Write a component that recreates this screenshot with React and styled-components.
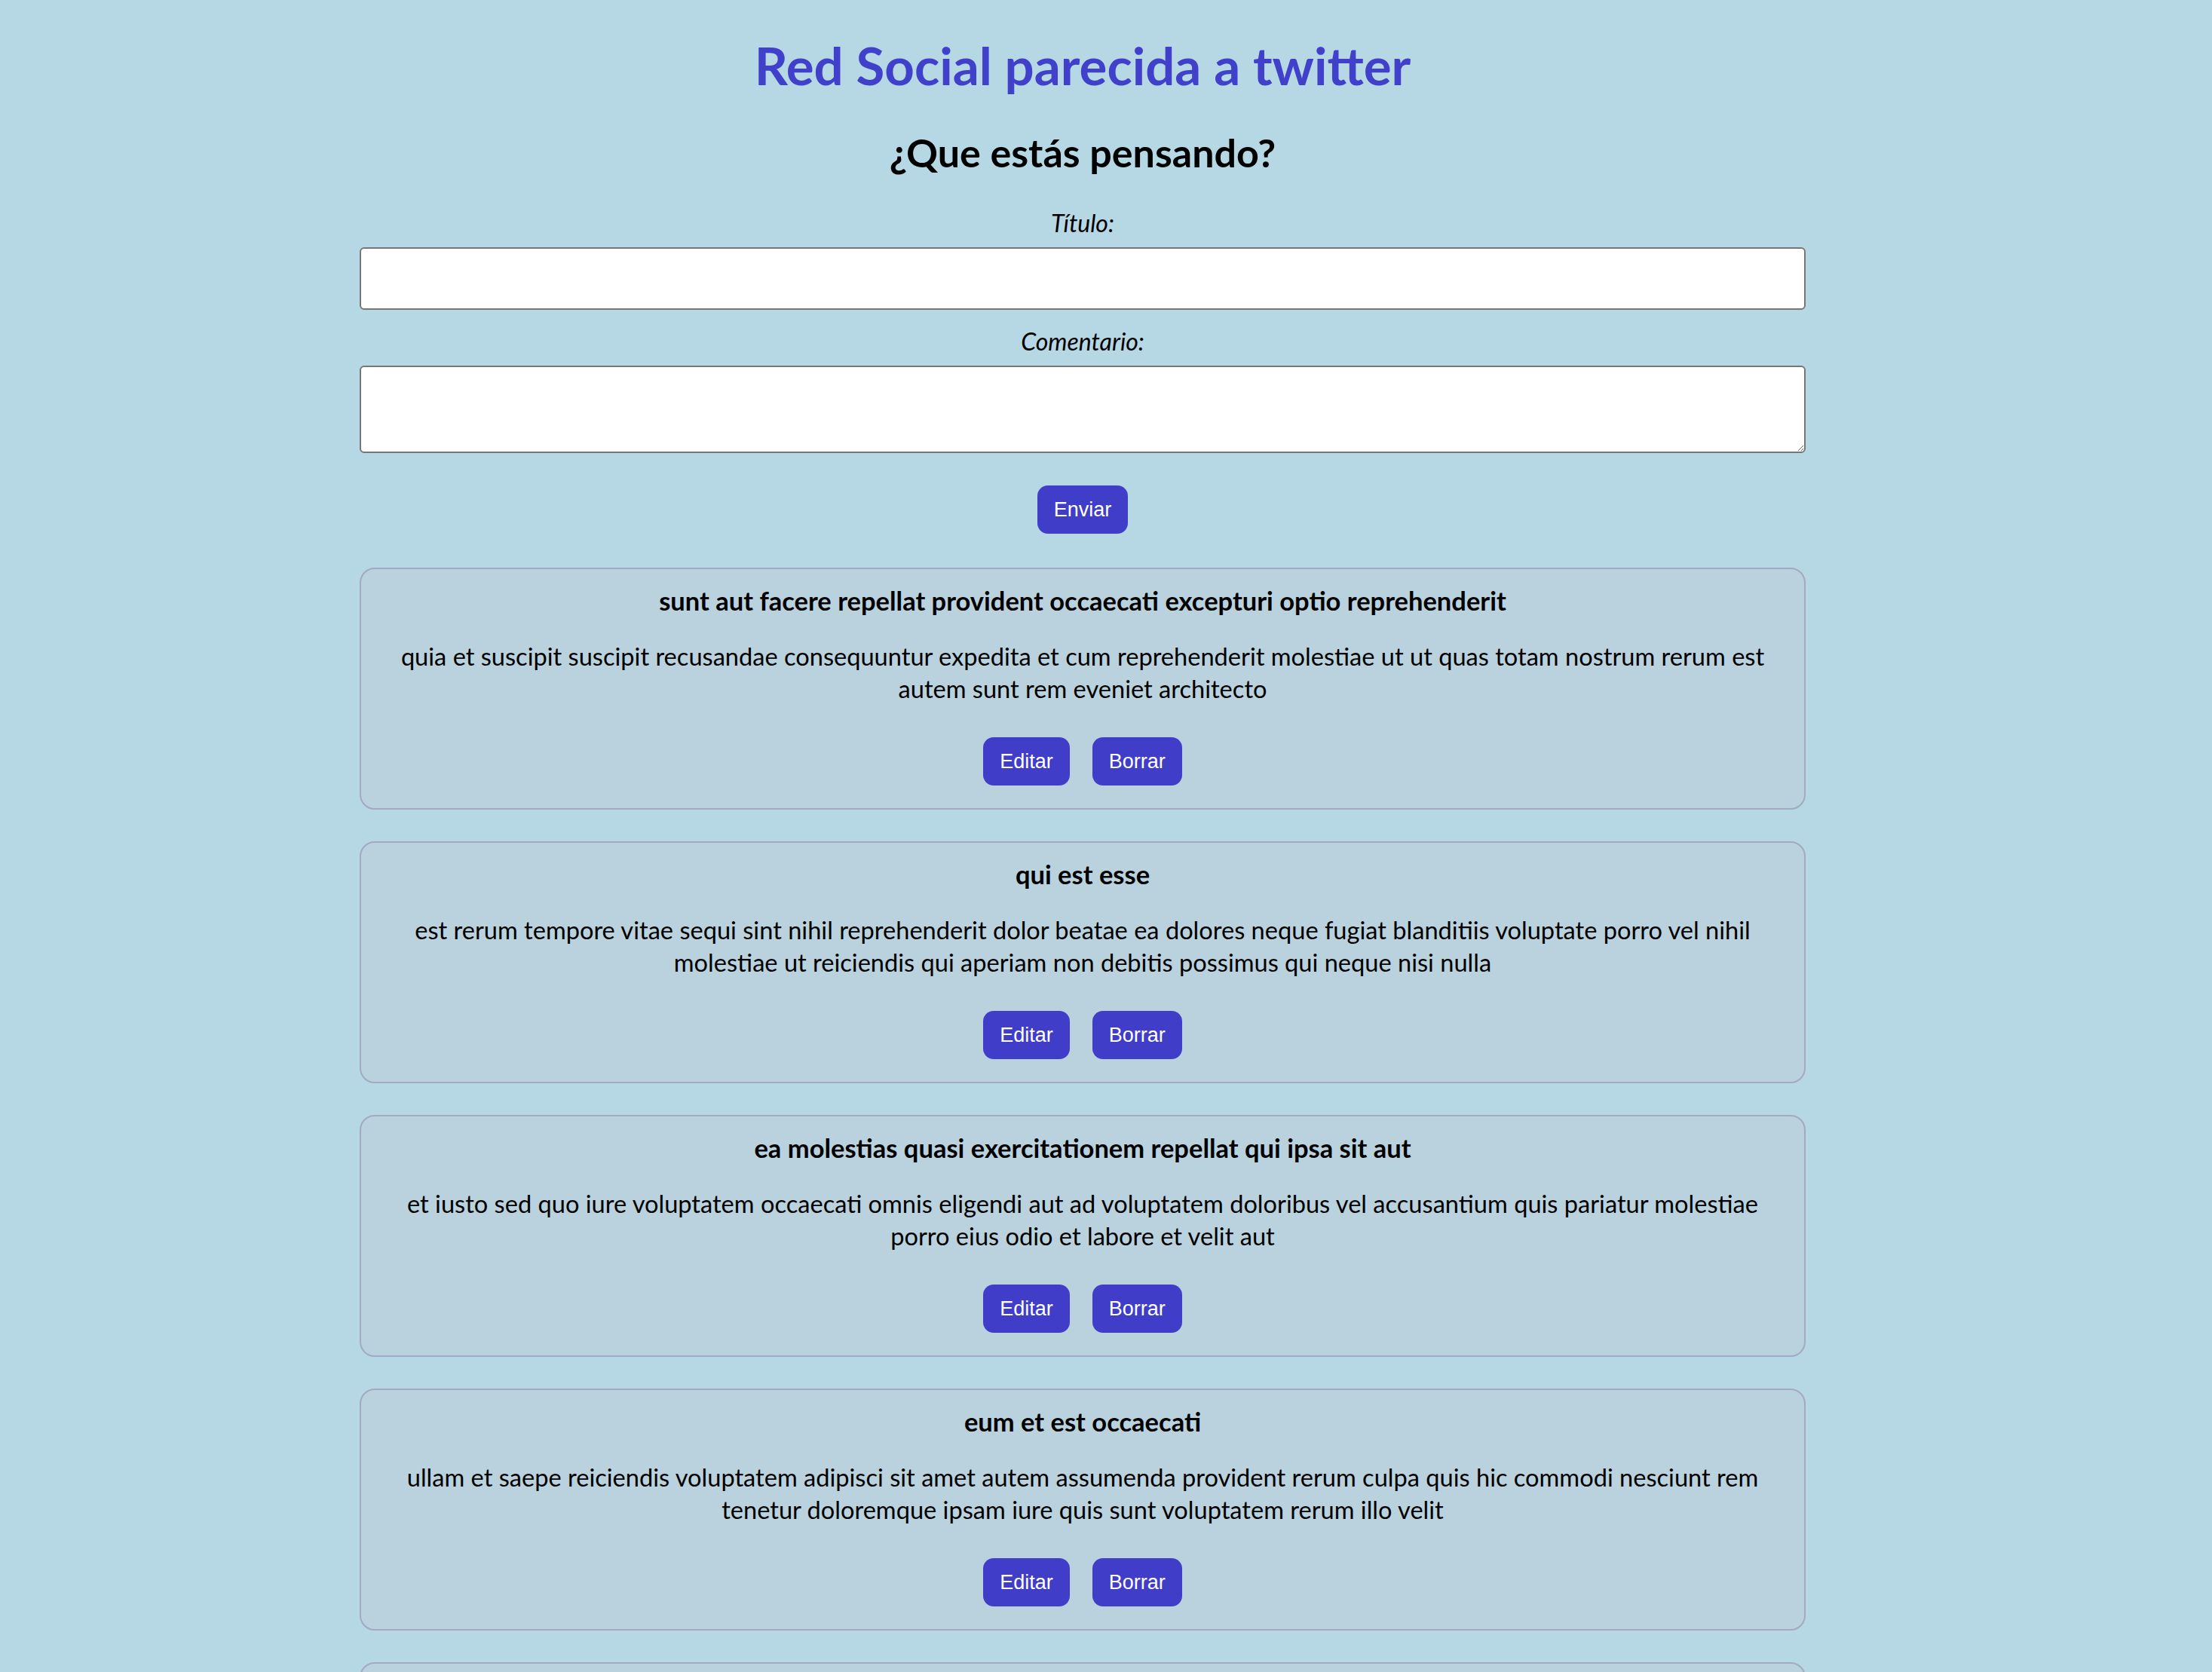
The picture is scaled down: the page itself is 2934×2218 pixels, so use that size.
import React from 'react';
import styled, { createGlobalStyle } from 'styled-components';

const posts = [
    {
        id: 1,
        title: 'sunt aut facere repellat provident occaecati excepturi optio reprehenderit',
        body: 'quia et suscipit suscipit recusandae consequuntur expedita et cum reprehenderit molestiae ut ut quas totam nostrum rerum est autem sunt rem eveniet architecto',
    },
    {
        id: 2,
        title: 'qui est esse',
        body: 'est rerum tempore vitae sequi sint nihil reprehenderit dolor beatae ea dolores neque fugiat blanditiis voluptate porro vel nihil molestiae ut reiciendis qui aperiam non debitis possimus qui neque nisi nulla',
    },
    {
        id: 3,
        title: 'ea molestias quasi exercitationem repellat qui ipsa sit aut',
        body: 'et iusto sed quo iure voluptatem occaecati omnis eligendi aut ad voluptatem doloribus vel accusantium quis pariatur molestiae porro eius odio et labore et velit aut',
    },
    {
        id: 4,
        title: 'eum et est occaecati',
        body: 'ullam et saepe reiciendis voluptatem adipisci sit amet autem assumenda provident rerum culpa quis hic commodi nesciunt rem tenetur doloremque ipsam iure quis sunt voluptatem rerum illo velit',
    },
    {
        id: 5,
        title: 'nesciunt quas odio',
        body: 'repudiandae veniam quaerat sunt sed alias aut fugiat sit autem sed est voluptatem omnis possimus esse voluptatibus quis est aut tenetur dolor neque',
    },
];

const GlobalStyle = createGlobalStyle`
    html, body {
        margin: 0;
        padding: 0;
        background: #b6d8e4;
    }

    body {
        font-family: Lato, 'Noto Sans', sans-serif;
        color: #000;
    }
`;

const App = () => {
    return (
        <Page>
            <GlobalStyle />
            <Container>
                <Title>Red Social parecida a twitter</Title>
                <Form onSubmit={(e) => e.preventDefault()}>
                    <FormTitle>¿Que estás pensando?</FormTitle>
                    <Label htmlFor="titulo">Título:</Label>
                    <Input id="titulo" type="text" />
                    <Label htmlFor="comentario" $spaced>
                        Comentario:
                    </Label>
                    <TextArea id="comentario" />
                    <SubmitRow>
                        <Button type="submit">Enviar</Button>
                    </SubmitRow>
                </Form>
                <PostList>
                    {posts.map((post) => (
                        <PostCard key={post.id}>
                            <PostTitle>{post.title}</PostTitle>
                            <PostBody>{post.body}</PostBody>
                            <Actions>
                                <Button type="button">Editar</Button>
                                <Button type="button">Borrar</Button>
                            </Actions>
                        </PostCard>
                    ))}
                </PostList>
            </Container>
        </Page>
    );
};

const Page = styled.main`
    padding: 48px 62px 80px 0;
`;

const Container = styled.div`
    width: 1918px;
    margin: 0 auto;
`;

const Title = styled.h1`
    margin: 0;
    font-size: 69px;
    line-height: 78px;
    font-weight: 700;
    text-align: center;
    color: #4040cb;
`;

const Form = styled.form`
    display: flex;
    flex-direction: column;
`;

const FormTitle = styled.h2`
    margin: 47px 0 0;
    font-size: 52px;
    line-height: 58px;
    font-weight: 700;
    text-align: center;
`;

const Label = styled.label`
    display: block;
    margin-top: ${(p) => (p.$spaced ? '22px' : '45px')};
    font-size: 32px;
    line-height: 40px;
    font-style: italic;
    text-align: center;
`;

const Input = styled.input`
    box-sizing: border-box;
    width: 100%;
    height: 83px;
    margin-top: 12px;
    border: 2px solid #767676;
    border-radius: 6px;
    background: #fff;
    font-size: 28px;
    padding: 4px 10px;
`;

const TextArea = styled.textarea`
    box-sizing: border-box;
    width: 100%;
    height: 116px;
    margin-top: 12px;
    border: 2px solid #767676;
    border-radius: 6px;
    background: #fff;
    font-size: 28px;
    padding: 4px 10px;
`;

const SubmitRow = styled.div`
    display: flex;
    justify-content: center;
    margin-top: 43px;
`;

const Button = styled.button`
    height: 64px;
    padding: 0 22px;
    border: none;
    border-radius: 14px;
    background: #403dc9;
    color: #fff;
    font-family: 'Liberation Sans', Arial, sans-serif;
    font-size: 27px;
    cursor: pointer;
`;

const PostList = styled.section`
    display: flex;
    flex-direction: column;
    gap: 42px;
    margin-top: 45px;
`;

const PostCard = styled.article`
    padding: 20px 44px 30px;
    border: 2px solid #a3a9c3;
    border-radius: 20px;
    background: #b9d2de;
    text-align: center;
`;

const PostTitle = styled.h3`
    margin: 0;
    font-size: 34.5px;
    line-height: 43px;
    font-weight: 700;
`;

const PostBody = styled.p`
    margin: 31px 0 0;
    font-size: 32.6px;
    line-height: 43px;
`;

const Actions = styled.div`
    display: flex;
    justify-content: center;
    gap: 30px;
    margin-top: 43px;
`;

export default App;
